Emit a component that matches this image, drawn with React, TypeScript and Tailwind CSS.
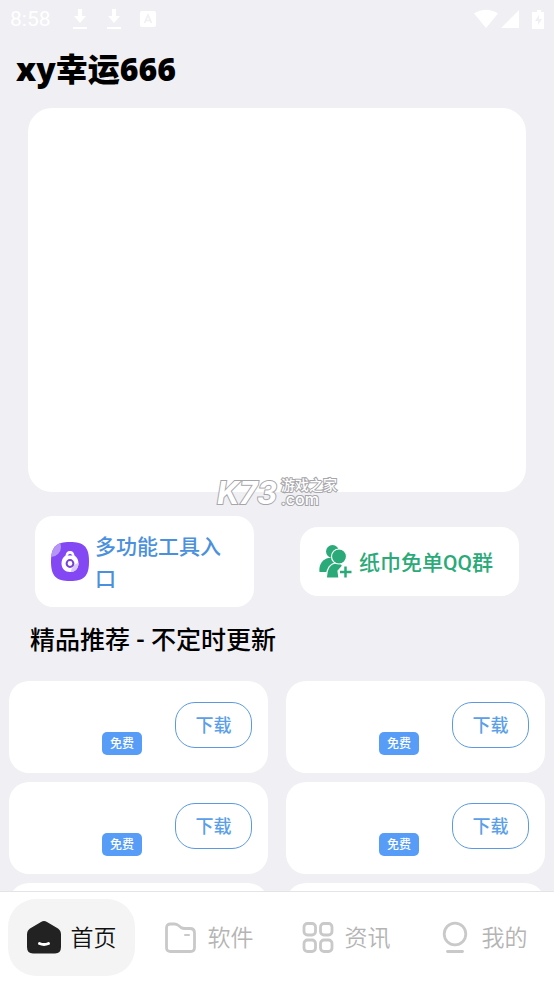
import type { ReactNode } from 'react';

const outline = 'text-white [-webkit-text-stroke:2px_#a6a6aa] [paint-order:stroke_fill]';

function DownloadGlyph() {
  return (
    <svg width="16" height="20" viewBox="0 0 16 20" fill="#fff" aria-hidden="true">
      <path d="M6 0h4v7h4l-6 7-6-7h4zM1 18h14v2H1z" />
    </svg>
  );
}

function StatusBar() {
  return (
    <header className="flex h-[38px] shrink-0 items-center px-2.5 text-white">
      <span className="w-[62px] pt-0.5 font-['Roboto','Noto_Sans_CJK_SC',sans-serif] text-[21px]">8:58</span>
      <div className="flex items-center gap-[18px]">
        <DownloadGlyph />
        <DownloadGlyph />
        <svg width="16" height="16" viewBox="0 0 16 16" aria-hidden="true">
          <rect width="16" height="16" rx="2" fill="#fff" />
          <path d="M4.5 12 8 4l3.500 8M6 9.500h4" fill="none" stroke="#efeff4" strokeWidth="1.600" />
        </svg>
      </div>
      <svg className="ml-auto" width="70" height="20" viewBox="0 0 70 20" fill="#fff" aria-hidden="true">
        <path d="M0 4.500Q12 -3 24 4.500L12 19zM45 1v18H27zM60 3h3V1h4v2h3v17H58V3z" />
        <path d="m65 6-4 6h3v4l4-6h-3z" fill="#efeff4" />
      </svg>
    </header>
  );
}

function LockIcon() {
  return (
    <svg className="shrink-0" width="38" height="39" viewBox="0 0 38 39" aria-hidden="true">
      <defs>
        <clipPath id="tile">
          <path d="M19 0C33 0 38 5 38 19.500S33 39 19 39 0 34 0 19.500 5 0 19 0z" />
        </clipPath>
      </defs>
      <g clipPath="url(#tile)">
        <rect width="38" height="39" fill="#8347f3" />
        <circle cx="0" cy="5" r="10" fill="#b596f7" />
      </g>
      <path d="M19 9c-3 0-4 2-4.500 4.500C12 15 10.500 18 10.500 21.500c0 5 3.700 8.500 8.500 8.500s8.500-3.500 8.500-8.500c0-3.500-1.500-6.500-4-8C23 11 22 9 19 9z" fill="#fff" />
      <path d="M27.500 21c0 5-3 9-7.500 9 0-4 3-8 7.500-9z" fill="#d9c8fb" />
      <path d="M16.500 13.500q2.500-3.500 5 0z" fill="#8347f3" />
      <circle cx="19" cy="21.500" r="3.400" fill="#fff" stroke="#7440d8" strokeWidth="2" />
    </svg>
  );
}

function GroupIcon() {
  return (
    <svg className="shrink-0" width="33" height="33" viewBox="0 0 33 33" aria-hidden="true">
      <g fill="#2aaa78">
        <circle cx="13.500" cy="6.500" r="6.500" />
        <path d="M0.500 27c-1-7 3-13 9-14h8v14z" />
        <path d="M7.500 33C7 24 11 18 18 18c4 0 5 1 5.500 3L19 26l1 7z" stroke="#fff" strokeWidth="1.200" />
        <circle cx="20" cy="11.500" r="7.500" stroke="#fff" strokeWidth="1.200" />
      </g>
      <path d="M26.500 19.500V33M20 27h13" stroke="#fff" strokeWidth="5" />
      <path d="M26.500 21.500v11M21 27h11.500" stroke="#2aaa78" strokeWidth="2.500" />
    </svg>
  );
}

function Shortcut({ icon, children, className }: { icon: ReactNode; children: ReactNode; className: string }) {
  return (
    <button
      type="button"
      className={`mx-[23px] flex items-center rounded-[18px] bg-white text-left text-[21px] font-medium leading-8 ${className}`}
    >
      {icon}
      <span className="pt-0.5">{children}</span>
    </button>
  );
}

function AppCard() {
  return (
    <li className="flex h-[92px] items-center justify-end rounded-[20px] bg-white pr-4">
      <span className="mb-[18px] mr-[33px] self-end rounded-[5px] bg-[#579df7] px-2 pt-px text-xs font-medium leading-[22px] text-white">
        免费
      </span>
      <button
        type="button"
        className="mb-1 h-[46px] w-[77px] rounded-[20px] border border-[#5b9ae0] pt-0.5 text-lg font-medium text-[#5b9fe8]"
      >
        下载
      </button>
    </li>
  );
}

const tabs = [
  {
    label: '首页',
    active: true,
    icon: (
      <>
        <path d="M14 1q3-2 6 0L31 7.500q3 2 3 6V26q0 6.500-6 6.500H6q-6 0-6-6.500V13.500q0-4 3-6z" fill="#222" />
        <path d="M12.500 22.500q4.500 2 9 0" fill="none" stroke="#fff" strokeWidth="3" strokeLinecap="round" />
      </>
    ),
  },
  {
    label: '软件',
    active: false,
    icon: (
      <g fill="none" stroke="#c9c9c9" strokeWidth="2.800" strokeLinecap="round" strokeLinejoin="round">
        <path d="M2.500 7q0-4 4-4h4q2 0 4 1.500L17 6.500q1.500 1 4 1h5q4.500 0 4.500 4.500V26.500q0 4-4 4h-20q-4 0-4-4z" />
        <path d="M21 14h4" strokeWidth="2" />
      </g>
    ),
  },
  {
    label: '资讯',
    active: false,
    icon: (
      <g fill="none" stroke="#c9c9c9" strokeWidth="2.800">
        <rect x="3" y="2.500" width="11.500" height="11.500" rx="3.500" />
        <rect x="19.500" y="2.500" width="11.500" height="11.500" rx="3.500" />
        <rect x="3" y="19" width="11.500" height="11.500" rx="3.500" />
        <rect x="19.500" y="19" width="11.500" height="11.500" rx="3.500" />
      </g>
    ),
  },
  {
    label: '我的',
    active: false,
    icon: (
      <g fill="none" stroke="#c9c9c9" strokeWidth="2.800" strokeLinecap="round">
        <circle cx="17" cy="13" r="10.800" />
        <path d="M9.500 30.500h15" />
      </g>
    ),
  },
];

export default function App() {
  return (
    <div className="flex h-screen flex-col overflow-hidden bg-[#efeff4] font-['Roboto','Noto_Sans_CJK_SC',sans-serif] text-black">
      <StatusBar />
      <main className="min-h-0 flex-1 overflow-y-auto [scrollbar-width:none]">
        <h1 className="px-4 pb-4 pt-2 font-['Noto_Sans','Noto_Sans_CJK_SC',sans-serif] text-[32px] font-black leading-[46px]">
          xy幸运666
        </h1>

        <section className="relative mx-7 h-96 rounded-3xl bg-white">
          <div className="absolute left-1/2 top-full flex -translate-x-1/2 -translate-y-1/2 items-center gap-1" aria-hidden="true">
            <span className={`pt-0.5 font-['Inter',sans-serif] text-[31px] font-bold italic leading-8 ${outline}`}>K73</span>
            <span className={`flex flex-col text-sm font-medium leading-[14px] ${outline}`}>
              <span className="whitespace-nowrap">游戏之家</span>
              <span className="font-['Inter',sans-serif] text-base leading-[14px]">.com</span>
            </span>
          </div>
        </section>

        <div className="mt-6 grid grid-cols-2 items-center px-3">
          <Shortcut icon={<LockIcon />} className="h-[91px] gap-1.5 pl-4 pr-5 text-[#4a90dc]">
            多功能工具入口
          </Shortcut>
          <Shortcut icon={<GroupIcon />} className="h-[69px] gap-[7px] whitespace-nowrap pl-[19px] text-[#2aaa78]">
            纸巾免单QQ群
          </Shortcut>
        </div>

        <h2 className="mb-6 mt-[18px] px-[30px] text-[25px] font-medium leading-8">精品推荐 - 不定时更新</h2>

        <ul className="grid grid-cols-2 gap-x-[18px] gap-y-[9px] px-[9px]">
          {[1, 2, 3, 4, 5, 6].map((id) => (
            <AppCard key={id} />
          ))}
        </ul>
      </main>

      <nav className="grid h-[93px] shrink-0 grid-cols-4 border-t border-[#e4e4e8] bg-white px-[3px] pt-[7px]">
        {tabs.map(({ label, active, icon }) => (
          <button
            key={label}
            type="button"
            className={`mx-[5px] flex h-[77px] items-center justify-center gap-2.5 rounded-[28px] text-[23px] font-[350] ${
              active ? 'bg-[#f4f4f4] text-[#111]' : 'text-[#b4b4b4]'
            }`}
          >
            <svg width="34" height="34" viewBox="0 0 34 34" aria-hidden="true">
              {icon}
            </svg>
            <span className="pt-[3px]">{label}</span>
          </button>
        ))}
      </nav>
    </div>
  );
}
